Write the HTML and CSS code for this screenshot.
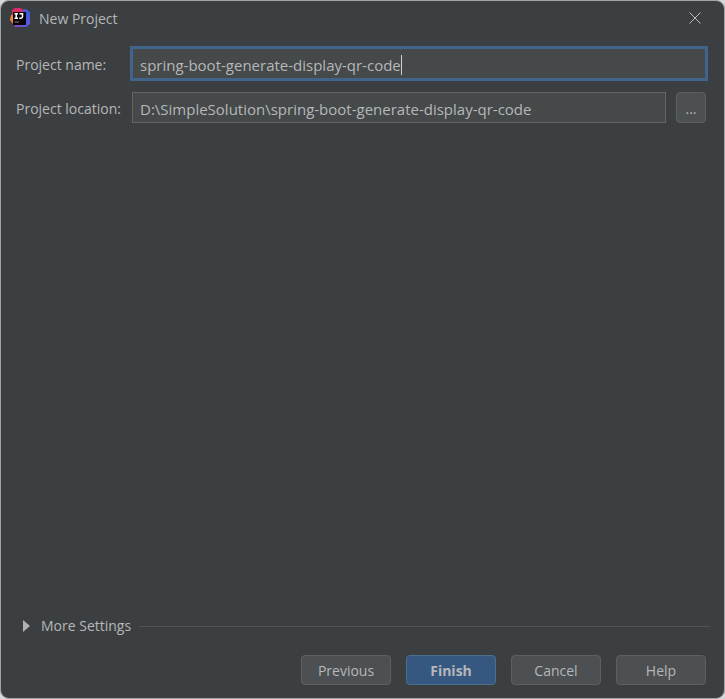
FILE: index.html
```html
<!DOCTYPE html>
<html lang="en">
<head>
<meta charset="utf-8">
<title>New Project</title>
<link rel="stylesheet" href="styles.css">
</head>
<body>
<form class="dialog">
  <header class="titlebar">
    <svg class="logo" viewBox="0 0 20 20" aria-hidden="true">
      <defs>
        <linearGradient id="blue" x1="0" y1="0" x2="1" y2="1">
          <stop offset="0" stop-color="#8a4fe0"/>
          <stop offset=".5" stop-color="#3c5ce0"/>
          <stop offset="1" stop-color="#6a55d8"/>
        </linearGradient>
        <linearGradient id="pink" x1="0" y1="0" x2="0" y2="1">
          <stop offset="0" stop-color="#d8286c"/>
          <stop offset=".6" stop-color="#e0404a"/>
          <stop offset="1" stop-color="#b83a9c"/>
        </linearGradient>
      </defs>
      <path fill="url(#blue)" d="M11 2 16 1l4 3v12l-4 3H6l-3-4 8-9z"/>
      <path fill="url(#pink)" d="M2 2 5 0h6l3 4-8 9-3 3-1-4z"/>
      <path fill="#f08a3c" d="M1 7 0 12l3 4 3-4-3-5z"/>
      <path fill="#8c49bd" d="m3 14 4-2 6 4-4 3H5z"/>
      <rect x="3" y="4" width="13" height="13" fill="#080408"/>
      <path fill="none" stroke="#fff" stroke-width="1.500" d="M4.500 5.800H8M6.200 5.800v4.400M4.500 10.200H8M9.500 5.800h3v3q0 1.400-1.500 1.400H9.200"/>
      <path fill="#8d858d" d="M4.500 13.500H9v1H4.500z"/>
    </svg>
    <h1 class="title">New Project</h1>
    <button class="close" type="button" aria-label="Close">
      <svg class="close-icon" viewBox="0 0 12 12" aria-hidden="true"><path d="M.5.5l11 11M11.500.5l-11 11"/></svg>
    </button>
  </header>
  <main class="fields">
    <label for="name">Project name:</label>
    <div class="field focused">
      <input class="value" id="name" type="text" value="spring-boot-generate-display-qr-code" spellcheck="false"><span class="caret"></span>
    </div>
    <label for="location">Project location:</label>
    <div class="location">
      <div class="field">
        <input class="value" id="location" type="text" value="D:\SimpleSolution\spring-boot-generate-display-qr-code" spellcheck="false">
      </div>
      <button class="button browse" type="button" aria-label="Browse">...</button>
    </div>
  </main>
  <button class="more" type="button" aria-expanded="false">
    <svg class="arrow" viewBox="0 0 7 12" aria-hidden="true"><path d="M0 0l7 6-7 6z"/></svg>
    <span>More Settings</span>
    <span class="rule"></span>
  </button>
  <footer class="actions">
    <button class="button" type="button">Previous</button>
    <button class="button primary" type="submit">Finish</button>
    <button class="button" type="button">Cancel</button>
    <button class="button" type="button">Help</button>
  </footer>
</form>
</body>
</html>
```
FILE: styles.css
```css
* {
  box-sizing: border-box;
}

body {
  margin: 0;
  background: #d5d8d8;
  color: #b5b7b9;
  font: 14px/20px "Open Sans", "Noto Sans", sans-serif;
}

button,
input {
  font: inherit;
  color: inherit;
}

.dialog {
  display: flex;
  flex-direction: column;
  min-height: 100vh;
  border: 1px solid #a0a4a5;
  border-radius: 9px;
  background: #3c3f41;
}

.titlebar {
  display: flex;
  align-items: center;
  height: 34px;
  padding: 0 17px 0 9px;
}

.logo {
  width: 20px;
  height: 20px;
}

.title {
  flex: 1;
  margin: 0 0 0 9px;
  padding-top: 2px;
  font-size: 14px;
  font-weight: 400;
}

.close {
  display: flex;
  padding: 6px;
  border: 0;
  background: none;
}

.close-icon {
  width: 12px;
  height: 12px;
  fill: none;
  stroke: #bbbdbf;
}

.fields {
  display: grid;
  grid-template-columns: 108px 1fr;
  align-items: center;
  gap: 13px 8px;
  flex: 1;
  align-content: start;
  padding: 13px 18px 0 15px;
}

.fields label {
  padding-top: 2px;
  white-space: nowrap;
}

.field {
  display: flex;
  align-items: center;
  flex: 1;
  min-width: 0;
  height: 31px;
  padding: 2px 7px 0;
  border: 1px solid #646464;
  background: #45494a;
}

.focused {
  border-color: #466d94;
  outline: 3px solid #41658a;
  outline-offset: -1px;
}

.value {
  field-sizing: content;
  max-width: 100%;
  padding: 0;
  border: 0;
  outline: 0;
  background: none;
  font-size: 15px;
}

.caret {
  width: 1px;
  height: 20px;
  background: #d0d0d0;
}

.location {
  display: flex;
  gap: 10px;
}

.button {
  width: 90px;
  height: 30px;
  padding: 2px 0 0;
  border: 1px solid #5e6060;
  border-radius: 4px;
  background: #4c5052;
}

.primary {
  border-color: #4c708c;
  background: #365880;
  font-weight: 700;
}

.browse {
  width: 30px;
  height: 31px;
}

.more {
  display: flex;
  align-items: center;
  margin: 0 14px 0 22px;
  padding: 0;
  border: 0;
  background: none;
  white-space: nowrap;
}

.arrow {
  width: 7px;
  height: 12px;
  margin-right: 11px;
  fill: #afb1b3;
}

.rule {
  flex: 1;
  height: 1px;
  margin-left: 8px;
  background: #515456;
}

.actions {
  display: flex;
  justify-content: flex-end;
  gap: 15px;
  padding: 19px 18px 13px;
}
```
